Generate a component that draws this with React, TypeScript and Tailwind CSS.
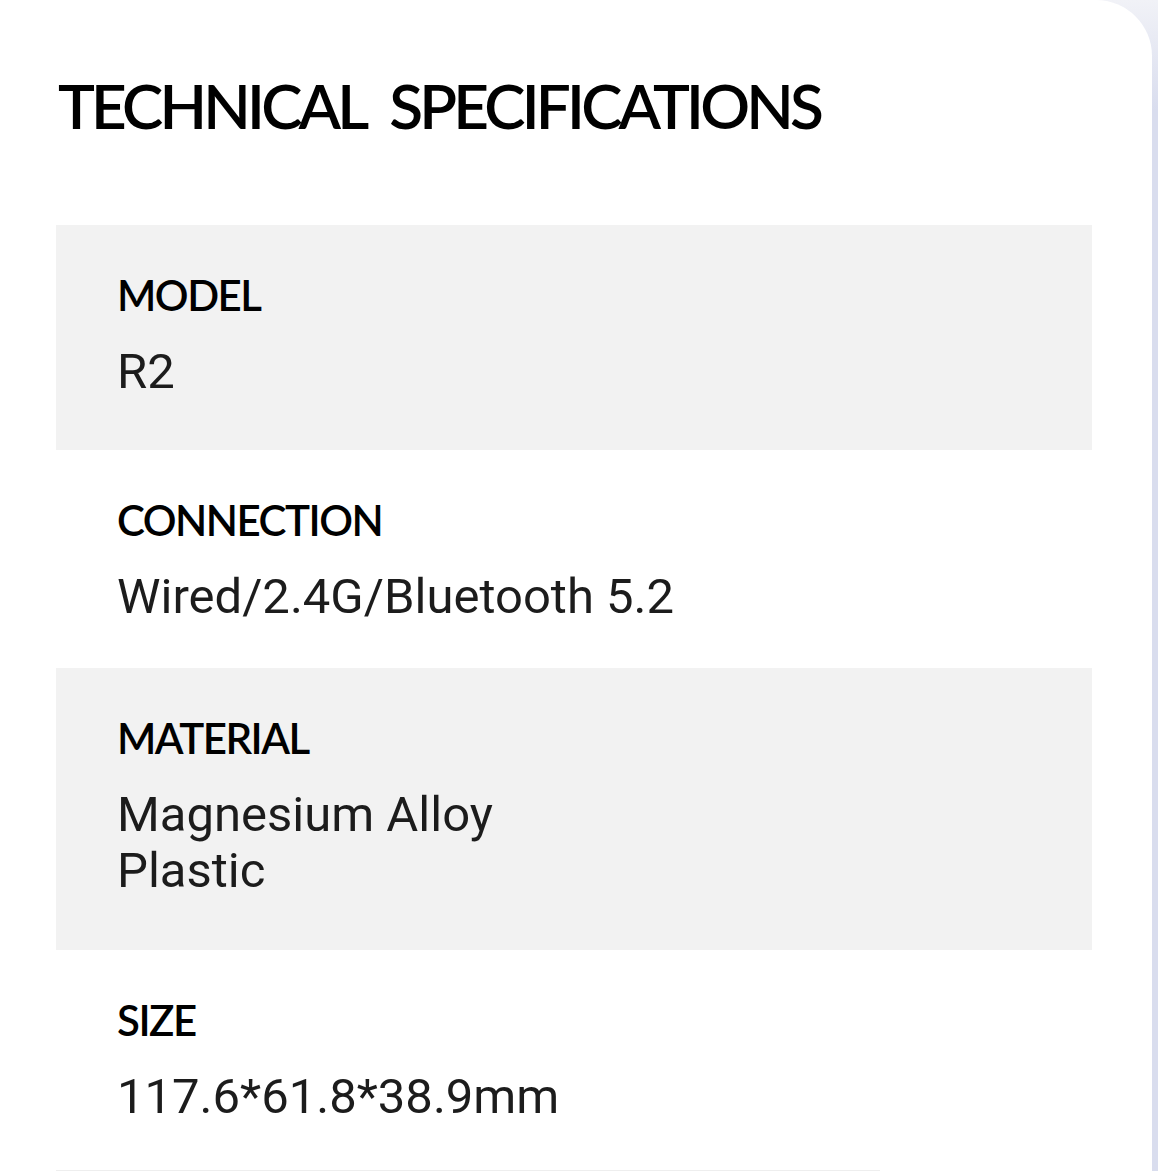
const specs: { label: string; values: string[]; shade: boolean; h: string }[] = [
  { label: "MODEL", values: ["R2"], shade: true, h: "h-[225px]" },
  { label: "CONNECTION", values: ["Wired/2.4G/Bluetooth 5.2"], shade: false, h: "h-[218px]" },
  { label: "MATERIAL", values: ["Magnesium Alloy", "Plastic"], shade: true, h: "h-[282px]" },
  { label: "SIZE", values: ["117.6*61.8*38.9mm"], shade: false, h: "h-[220px]" },
];

export default function App() {
  return (
    <div className="w-[1158px] h-[1171px] overflow-hidden bg-[linear-gradient(to_bottom,#f1f2f7_0px,#d9ddee_110px)]">
      <div className="w-[1152px] h-[1171px] bg-white rounded-tr-[56px] pt-[70px] overflow-hidden">
        <h2 className="pl-[58px] text-[62px] leading-[70px] font-semibold tracking-[-3.8px] [word-spacing:14px] text-black font-['Lato',sans-serif]">
          TECHNICAL SPECIFICATIONS
        </h2>
        <div className="mt-[85px] ml-[56px] w-[1036px]">
          {specs.map((s) => (
            <div
              key={s.label}
              className={`${s.shade ? "bg-[#f2f2f2]" : "bg-white"} ${s.h} pl-[61px] pt-[44px]`}
            >
              <div className="text-[42px] leading-[52px] font-semibold tracking-[-1.5px] text-black font-['Lato',sans-serif]">
                {s.label}
              </div>
              <div className="mt-[23px] text-[49px] leading-[56px] text-[#1c1c1c] font-['Roboto',sans-serif]">
                {s.values.map((v) => (
                  <div key={v}>{v}</div>
                ))}
              </div>
            </div>
          ))}
          <div className="h-[2px] w-[824px] bg-[#eeeeee]" />
        </div>
      </div>
    </div>
  );
}
